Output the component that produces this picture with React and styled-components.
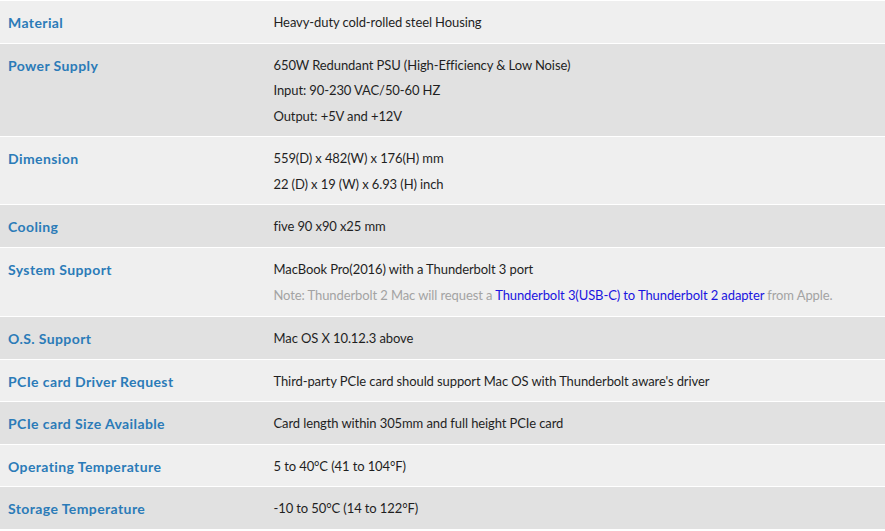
import styled, { createGlobalStyle } from 'styled-components';

const GlobalStyle = createGlobalStyle`
  body {
    margin: 0;
    background: #ffffff;
    font-family: 'Lato', 'Liberation Sans', sans-serif;
  }
`;

const specs = [
  { label: 'Material', lines: ['Heavy-duty cold-rolled steel Housing'] },
  {
    label: 'Power Supply',
    lines: [
      '650W Redundant PSU (High-Efficiency & Low Noise)',
      'Input: 90-230 VAC/50-60 HZ',
      'Output: +5V and +12V',
    ],
  },
  {
    label: 'Dimension',
    lines: ['559(D) x 482(W) x 176(H) mm', '22 (D) x 19 (W) x 6.93 (H) inch'],
  },
  { label: 'Cooling', lines: ['five 90 x90 x25 mm'] },
  {
    label: 'System Support',
    lines: ['MacBook Pro(2016) with a Thunderbolt 3 port'],
    note: true,
  },
  { label: 'O.S. Support', lines: ['Mac OS X 10.12.3 above'] },
  {
    label: 'PCIe card Driver Request',
    lines: ["Third-party PCIe card should support Mac OS with Thunderbolt aware's driver"],
  },
  {
    label: 'PCIe card Size Available',
    lines: ['Card length within 305mm and full height PCIe card'],
  },
  { label: 'Operating Temperature', lines: ['5 to 40°C (41 to 104°F)'] },
  { label: 'Storage Temperature', lines: ['-10 to 50°C (14 to 122°F)'] },
];

function App() {
  return (
    <>
      <GlobalStyle />
      <StTable>
        <tbody>
          {specs.map((spec, i) => (
            <StRow key={spec.label} $dark={i % 2 === 1}>
              <StLabel>{spec.label}</StLabel>
              <StValue>
                {spec.lines.map((line) => (
                  <StLine key={line}>{line}</StLine>
                ))}
                {spec.note ? (
                  <StNote>
                    Note: Thunderbolt 2 Mac will request a{' '}
                    <StLink href="#">Thunderbolt 3(USB-C) to Thunderbolt 2 adapter</StLink>{' '}
                    from Apple.
                  </StNote>
                ) : null}
              </StValue>
            </StRow>
          ))}
        </tbody>
      </StTable>
    </>
  );
}

export default App;

const StTable = styled.table`
  width: 100%;
  border-collapse: collapse;
  border-top: 1px solid #f0f0f0;
`;

const StRow = styled.tr`
  background-color: ${(props) => (props.$dark ? '#e1e1e1' : '#efefef')};
  border-top: 1px solid #ffffff;
`;

const StLabel = styled.td`
  width: 30%;
  padding: 9px 8px 7px;
  vertical-align: top;
  line-height: 25.5px;
  font-size: 14px;
  font-weight: 700;
  letter-spacing: 0.4px;
  color: #2b7bb8;
`;

const StValue = styled.td`
  padding: 9px 8px 7px;
  vertical-align: top;
  font-size: 13px;
  letter-spacing: -0.1px;
  color: #1f1f1f;
`;

const StLine = styled.div`
  line-height: 25.5px;
`;

const StNote = styled.div`
  line-height: 27px;
  color: #a3a3a3;
`;

const StLink = styled.a`
  color: #1a14e0;
  text-decoration: none;
`;
